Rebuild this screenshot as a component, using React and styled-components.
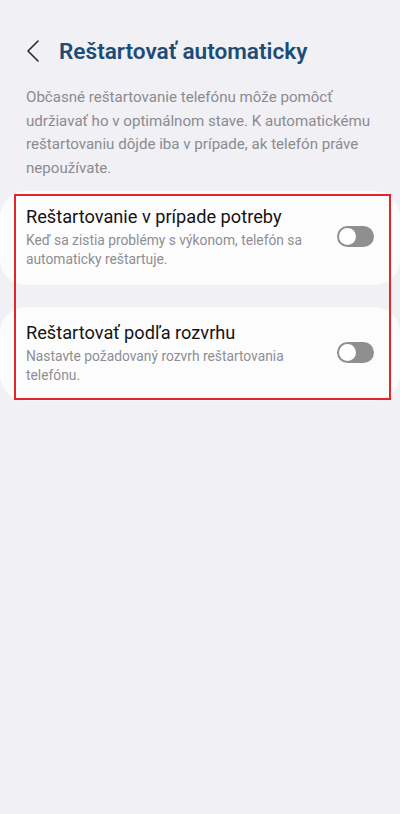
import React from "react";
import styled, { createGlobalStyle } from "styled-components";

const Global = createGlobalStyle`
  html, body { margin: 0; padding: 0; background: #f1f0f5; }
  body { font-family: Roboto, "Noto Sans", sans-serif; -webkit-font-smoothing: antialiased; }
`;

const Page = styled.div`
  position: relative;
  width: 400px;
  min-height: 814px;
  background: #f1f0f5;
  box-sizing: border-box;
  padding-top: 34px;
`;

const Header = styled.div`
  display: flex;
  align-items: center;
  height: 34px;
  padding-left: 24px;
  gap: 17px;
`;

const BackButton = styled.button`
  width: 18px;
  height: 28px;
  padding: 0;
  border: none;
  background: none;
  display: flex;
  align-items: center;
  justify-content: center;
`;

const Title = styled.h1`
  margin: 0;
  font-size: 22.6px;
  font-weight: 600;
  color: #1d4c74;
  letter-spacing: 0;
`;

const Description = styled.p`
  margin: 18px 26px 0 26px;
  font-size: 15.1px;
  line-height: 23.5px;
  color: #8b8b90;
`;

const List = styled.div`
  display: flex;
  flex-direction: column;
  gap: 22px;
  margin-top: 11px;
`;

const Card = styled.div`
  display: flex;
  align-items: center;
  background: #fcfcfd;
  border-radius: 26px;
  padding: 15px 26px 16px 26px;
  min-height: 62px;
`;

const CardText = styled.div`
  flex: 1;
  display: flex;
  flex-direction: column;
  gap: 3px;
`;

const CardTitle = styled.div`
  font-size: 18.2px;
  line-height: 22px;
  color: #141414;
`;

const CardSub = styled.div`
  font-size: 13.8px;
  line-height: 19px;
  color: #8e8e93;
  padding-right: 8px;
`;

const Toggle = styled.div`
  position: relative;
  flex: none;
  width: 37px;
  height: 21px;
  border-radius: 11px;
  background: #8f8f8f;
  margin-top: -2px;
`;

const Knob = styled.div`
  position: absolute;
  top: 2px;
  left: 2px;
  width: 17px;
  height: 17px;
  border-radius: 50%;
  background: #ffffff;
`;

const Highlight = styled.div`
  position: absolute;
  left: 14px;
  top: 194px;
  width: 377px;
  height: 206px;
  border: 2px solid #e5252a;
  box-sizing: border-box;
  pointer-events: none;
`;

const items = [
  {
    title: "Reštartovanie v prípade potreby",
    sub: "Keď sa zistia problémy s výkonom, telefón sa automaticky reštartuje.",
  },
  {
    title: "Reštartovať podľa rozvrhu",
    sub: "Nastavte požadovaný rozvrh reštartovania telefónu.",
  },
];

export default function App() {
  return (
    <>
      <Global />
      <Page>
        <Header>
          <BackButton aria-label="Späť">
            <svg width="14" height="24" viewBox="0 0 14 24">
              <path d="M12 2 L2 12 L12 22" fill="none" stroke="#2a2a2a" strokeWidth="1.6" strokeLinecap="round" strokeLinejoin="round" />
            </svg>
          </BackButton>
          <Title>Reštartovať automaticky</Title>
        </Header>
        <Description>
          Občasné reštartovanie telefónu môže pomôcť udržiavať ho v optimálnom stave. K automatickému reštartovaniu dôjde iba v prípade, ak telefón práve nepoužívate.
        </Description>
        <List>
          {items.map((it) => (
            <Card key={it.title}>
              <CardText>
                <CardTitle>{it.title}</CardTitle>
                <CardSub>{it.sub}</CardSub>
              </CardText>
              <Toggle>
                <Knob />
              </Toggle>
            </Card>
          ))}
        </List>
        <Highlight />
      </Page>
    </>
  );
}
